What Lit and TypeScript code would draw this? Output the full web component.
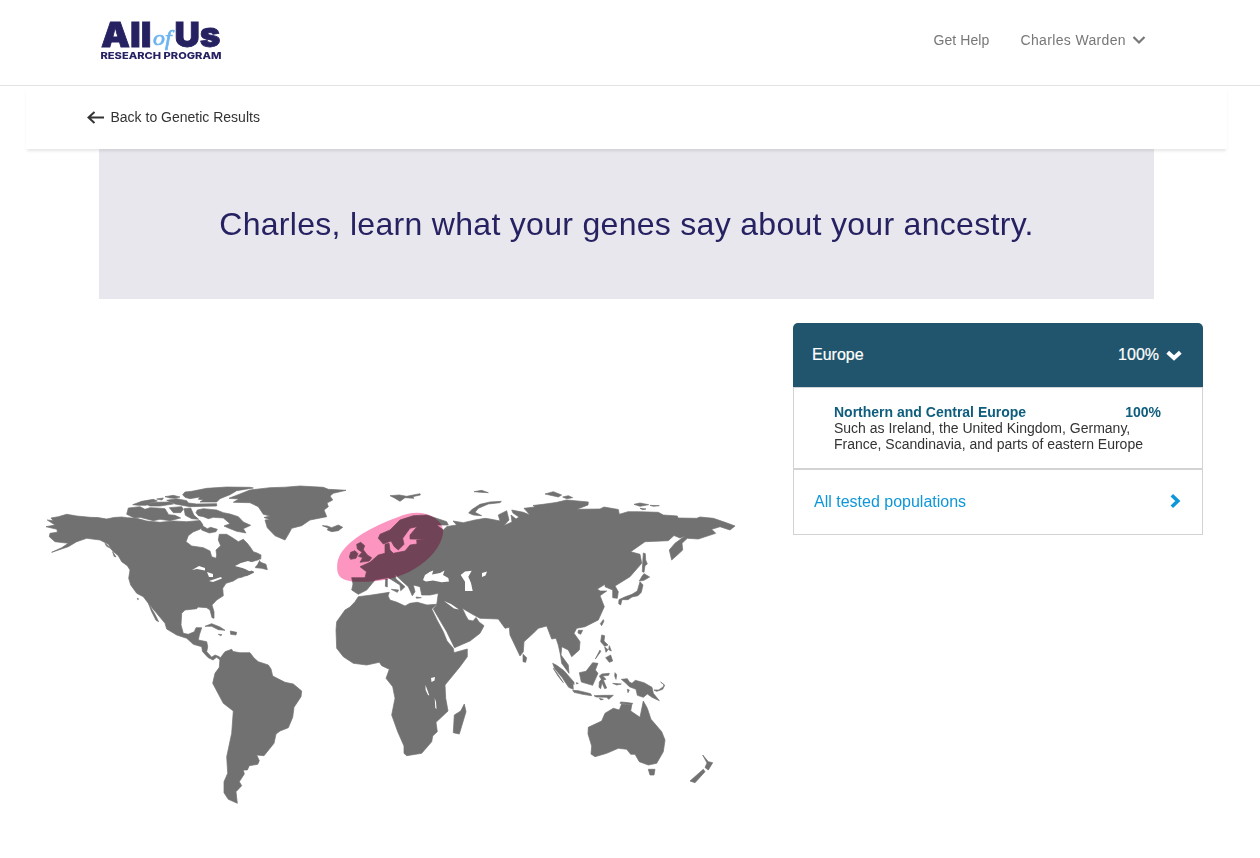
import { LitElement, html, css, svg } from "lit";
import { customElement } from "lit/decorators.js";

const LAND = [
  // North America
  "M46 526.7L55 525 47.3 520 53.3 520.7 51 518 58.3 516.7 66.7 514.3 76.7 516 90 517.3 98 517.6 106.7 519 114 517.5 121.7 517 127.3 517.7 136.7 518.3 146.7 521 160 522.3 173.3 521 186.7 521.7 200 520.5 203 525 200.500 529 193 532 188.3 535.7 186 541.7 191.7 546 203.3 547.7 210 551 211.7 556.7 216 558.3 216.7 555 216 550 220.7 545.7 218.3 540 219.3 534.3 226.7 534.3 233.3 538.3 238.3 541.7 243.3 539.3 247 543 250 546.7 253.3 551.7 257 553 261 555 260.7 559 250 562.3 240 563.3 235 567 246 563.5 243.3 568.3 248.3 571 253.3 571.7 250 574 241.7 577.3 238 578 233.3 581 226 583.3 222.7 588.3 223.3 595.7 216.7 600 212 605 214 611.7 214 618.3 212 617.7 210 610 206.7 607.7 198 607 196.7 608.7 185 610 181.7 613.3 181 625 183.3 633.3 188.3 634.3 194.3 631.7 196 627.7 201.7 627.7 199.3 635 198.3 640 206.7 641.7 207.7 646.7 206.7 651.7 211.7 657.2 215 655 219.3 656.7 220.5 660 216.5 657.3 213 660 208 657.5 202.5 651.5 201.7 646.7 193.3 644.3 186.7 638.3 176.7 635 166.7 629 165 623.3 156.7 613.3 148.3 603.3 143.3 596.7 136.7 593.3 130.7 585 128.7 578.3 130 570 127.3 565.7 121.7 561.7 118.3 555.7 111.7 550 108.3 544.3 100 540 86.7 538.3 76.7 541.7 68.3 546.7 51.7 552.3 61.7 547.7 68.3 543.3 60 542.3 55 541.7 49.3 536.7 50 533.3 57.3 532.3 57 529.3Z",
  // Greenland
  "M229 498.3L240 494 250 490 270 487.7 285 487.2 300 486 323.3 487.3 328.3 489.3 346 490.3 333.3 493.3 330 496 332.7 500 327 503 328.3 506.7 324 510 326.7 516.7 310 520 301.7 525.7 291.7 528.3 289 533.3 285 540 275 535.7 267.3 527.7 265 520 270 519.5 264 517.5 270 516 263.3 514.3 258.3 506.7 250 502.7 233.3 502.3 239 499Z",
  // South America
  "M220 658.3L225 651.7 231.7 649.3 233 651.5 240 652.7 250 652.7 254 658 258.3 661.7 268.3 665 271 669 272.7 676 285 682.3 293.3 684 301.7 691 301 696.7 294 707.3 292.7 717.3 288.3 727.7 280 731 276 734 274 743.3 264 755.7 256.7 755 259.3 760.7 257.7 764.3 249.3 765.7 247.3 770 243.3 770 244.3 774 239.3 781.7 241.7 785.7 236 791.7 237.3 803.3 228.3 799.3 224 792.7 224 781.7 227.7 773.3 226.7 756.7 231.7 733.3 233.3 711 223.3 703.3 212.7 683.3 215 673.3 219.3 667.3Z",
  // Africa
  "M358.3 596.7L371.7 595 389.3 592.3 388 596 390 600 397 602.3 405 606 410 603.3 417.3 602.3 427 605 436.7 604.3 431.7 609 437 620 443.3 631.7 447 641 453.3 648.3 454 652.7 467.3 649 467.3 656.7 460 666.7 445 685 445.7 698.3 448 711 436 722.3 437.3 731.7 432.7 736 431.7 741.7 421.7 753.3 406.7 755.7 404 753.3 404 746 397.7 731.7 391.7 715 395 698.3 392.7 686.7 386 678.3 389.3 669.3 381.7 665.7 379.3 662.3 366.7 665 353.3 663.3 343.3 656.7 336.7 648.3 336 630 336.7 621.7 345 610 350 607 355 601.7Z",
  "M464.3 704L466 711.7 459.3 734 453.3 732.7 454.3 715 460.7 711Z",
  // Eurasia
  "M351.7 577.7L365 577.7 366.5 571.7 360 566.7 370 562.3 378.3 555 385 553.3 385 544.3 389 543.3 390 550 393.3 553.3 405 551 410 545 417 544 416.7 540 426.7 539.3 410 539 410 535 417 526.7 410 528.3 402.7 538.3 404 544.3 398.3 550 394.3 546.7 391 541 383.3 544 378.3 538.3 380 534.3 390 530 400 520 413.3 515.7 426.7 515 446.7 521.7 448.3 525 436.7 525 443.3 530 447 526.5 456.7 525 453 521 463.3 522.7 475 520 485 518.3 490 519 500 521 498.3 515 506.7 510.7 509 520 504 525.5 512 522 511 515 516 519 519 517 513 513 511.7 510 523.3 512.3 530 515 524 508.3 535 507 533 505.5 543.3 504.3 556 502.5 566.7 500 588.3 502 588 505 576.7 509.3 600 509 604 507 618.3 509.5 619.3 514.3 628 511.7 638.3 511.7 658.3 512.3 663.3 515 677.3 516 678 518 696.7 518.3 700 517 713.3 518.3 725 522.3 735 526 730 530 720 526.7 711.7 529.3 715.7 533.3 698.3 539 687.3 538.3 682 543.3 682.7 550 677.3 555 671.7 560 669.3 550 675 543.3 685 536 680 538 674 535.5 668.3 540.7 645 541.7 630.7 551.7 640 554.3 641.7 563.3 630 576.7 615 586 618.3 591.7 617.3 598.3 612.7 597.7 612.7 590 605 586.7 605 584.3 597.3 589 600 591 606.7 591 600 595.7 604.3 606.7 598.3 620 585 626.7 576.7 628.3 574 633.3 580 641.7 579.3 650 571.7 656.7 568.3 650 561.7 646.7 561 655 568.3 665 569 673.3 561.7 663.3 560.5 655 558.3 645 556 638.3 551.7 639 546.7 626 538.3 628.3 533.3 633.3 524 641.7 523.3 651.7 520 656 510 635 509.3 627.3 505 628.3 498.3 619 480 618.3 472 614 462.3 608.3 466 616 468.3 620 473 621 476 617.5 479 622 484 625.7 480 633.3 470 641 454.5 647.7 446.7 631.7 433.3 609 436.7 605 438.3 593.3 430 595 421.7 595 420 586.7 413.3 585 415 591.7 412.3 595.7 408.3 586.7 403 582 395 574.5 396 579 405 586.7 400.7 590.7 400 585 392 580 388.3 577.7 375 580 366.7 590 358.3 594.3 351.7 590 353 584Z",
  // Australia
  "M588.3 727.3L601.7 721 605 713.3 613.3 708.3 619.3 710 621.7 704 631.7 705 630.7 711 640 717.3 643.3 701 647.3 708.3 651 719.3 661.7 731.7 665 740 663.3 751.7 656.7 763.3 648.3 765 639.3 761.7 635 754.3 630.7 754.3 626.7 749.3 618.3 748.3 606.7 753.3 595 756.7 591 754 591.7 746 588 734Z",
  "M648.3 769.3L655 769.3 654 775 650 775Z",
  "M702.7 755L708.3 761.7 712.7 762.7 708.3 770 705 767.5 707 763Z",
  "M703.3 769.3L705 771.7 695 782.7 690 781Z",
];

// Islands are drawn on grids three times finer than the map.
const ARCTIC_ISLANDS = [
  "M25 78L60 74 75 82 90 77 110 78 135 80 146 98 165 100 182 108 150 116 120 112 100 116 60 106 44 108 20 97Z",
  "M38 68L65 58 100 52 112 57 90 63 78 70 55 70ZM78 67L105 61 150 60 160 66 120 72 90 72Z",
  "M135 44L160 40 180 45 165 49 150 48ZM110 51L130 48 126 54ZM140 55L170 50 200 56 205 63 230 66 290 65 290 72 210 74 165 66Z",
  "M188 38L195 30 215 28 260 19 320 15 390 16 400 18 350 26 330 38 300 50 290 60 240 60 250 53 235 52 240 45 210 50 195 46Z",
  "M148 77L185 74 190 82 182 92 160 92ZM192 80L212 78 222 100 236 112 215 110 196 100Z",
  "M228 92L232 84 250 80 290 84 310 92 330 96 355 104 370 120 392 130 370 140 378 153 350 148 325 138 312 132 330 125 310 108 280 106 265 110 250 104 235 101Z",
  "M242 128L262 140 272 136 292 142 288 149 268 153 245 144Z",
];

const NORTH_ISLANDS = [
  // Newfoundland, Caribbean, Alaska and Baja fragments
  "M655 252L662 262 678 268 682 284 665 280 646 278ZM605 298L635 288 642 292 620 302ZM495 454L515 446 540 456 555 466 535 464 515 454ZM571 468L590 472 588 480 572 478ZM535 478L546 479 542 482ZM195 205L204 212 212 220 200 214ZM218 230L228 246 222 244ZM326 386L346 420 356 440 348 436 334 408ZM292 370L296 372 293 374ZM100 196L112 187 120 192 108 200Z",
  // Iceland
  "M847 152L862 153 875 158 895 150 908 157 895 167 875 170 862 165 865 159Z",
  // Svalbard and Novaya Zemlya
  "M1050 62L1078 60 1100 64 1140 56 1141 60 1118 65 1122 70 1095 68 1080 79 1062 68ZM1302 50L1325 46 1345 53 1322 52ZM1286 114L1295 104 1320 88 1350 81 1384 79 1380 83 1345 87 1315 100 1305 112 1325 122 1300 120Z",
  "M1515 57L1540 50 1565 60 1555 66ZM1568 66L1585 62 1598 68 1580 71ZM1782 88L1800 84 1826 89 1800 94ZM1830 91L1858 92 1840 94ZM1800 100L1818 102 1808 104Z",
  // British Isles, Corsica, Sardinia, Crete, Cyprus
  "M928 246L932 232 945 227 954 236 948 250 932 253ZM950 208L962 202 974 212 970 224 982 240 995 248 988 258 960 262 968 248 955 244 966 232 952 222ZM1037 312L1042 312 1042 336 1036 334ZM1054 343L1076 345 1072 352ZM1128 366L1144 368 1130 370ZM1194 380L1203 378 1198 383Z",
  // Sakhalin, Japan
  "M1810 234L1816 236 1817 255 1822 267 1815 272 1812 292 1807 290 1808 264ZM1806 304L1812 296 1829 306 1812 316 1798 318ZM1800 320L1809 330 1804 352 1794 362 1776 366 1764 374 1746 374 1742 390 1736 386 1737 374 1754 366 1776 358 1792 348Z",
  // Taiwan, Hainan, Sri Lanka, Philippines
  "M1690 434L1692 438 1685 452 1681 446ZM1615 466L1628 466 1622 478 1614 474ZM1449 538L1460 548 1457 562 1449 560ZM1685 480L1694 482 1692 498 1704 510 1694 514 1682 500ZM1708 512L1714 528 1706 524ZM1694 516L1704 524 1698 532ZM1697 548L1712 540 1718 558 1708 562ZM1680 525L1682 530 1666 552Z",
];

const SOUTH_ISLANDS = [
  "M38 70L50 76 72 92 98 122 100 148 86 142 66 112 44 86Z",
  "M98 151L115 152 152 161 155 167 128 163 102 157ZM162 167L190 166 220 166 206 178 200 172 168 171Z",
  "M118 98L138 94 158 68 174 70 166 90 174 100 158 136 124 126Z",
  "M178 108L186 102 208 100 206 106 188 108 198 118 190 120 200 144 194 146 186 128 182 146 177 142 178 126 184 118Z",
  "M225 98L230 104 228 118 224 108ZM218 130L244 132 230 135ZM178 175L190 178 182 180ZM262 148L268 150 264 158ZM95 122L102 126 102 134ZM109 128L115 130 110 132Z",
  "M244 118L262 116 268 126 276 130 286 121 312 128 336 142 340 160 358 182 336 172 322 162 310 172 292 166 288 148 268 140 256 128Z",
  "M342 150L356 150 370 140 372 134 362 126 374 136 368 148 350 154Z",
  "M242 186L255 187 278 190 276 194 258 192 240 190Z",
  "M40 85L55 105 70 128 54 108Z",
];

const WATER = [
  // Black Sea, Caspian, Aral
  "M423 580L425 575 430 571.7 433.3 570.5 432 574.5 440 573 444.5 570.5 443 575 448.3 578 449 581.5 441.7 582.3 433 580.5 426 581.5Z",
  "M460.7 575L465 571.5 471.7 570.7 468.3 576.7 471 583 472.7 591 465 591 465 581.7Z",
  "M482 573L487 571.5 485.5 575.5 482 577Z",
  "M444 601L451 604 459 609.5 454 608.5Z",
  // Great Lakes and Gulf of St Lawrence
  "M192 570L199 566 205 568 205 570.5 197 569ZM207 572L213 574 213 577 209 577ZM209 581L221 577 222 578.5 213 582Z",
  "M235 566L241 563 248 561 254 563 260 559 257 565 250 571 246 569Z",
  // African lakes
  "M431 678L435 677 434.5 680.5 431.5 682ZM425.5 685L427 689 429.3 695.5 428 695 425.6 690ZM434.7 698L436 702 436.5 709 435.3 708Z",
];

const HIGHLIGHT =
  "M337.3 570C336 558 342 550 351 542C365 530 385 522 397 517.500C410 511.500 424 511 434 517.500C442 523 445 529 442 538C438 551 426 563 409 572C393 580 372 583 352 581.500C342 580 338 577 337.300 570Z";

@customElement("world-map")
class WorldMap extends LitElement {
  static styles = css`
    :host { display: block; }
    .map { display: block; width: 700px; height: 330px; }
    .land { fill: #717171; stroke: #717171; stroke-width: 0.7; stroke-linejoin: round; }
    .islands { stroke-width: 2; }
    .water { fill: #fff; }
    .highlight { fill: #fc96c1; mix-blend-mode: multiply; }
  `;
  render() {
    return html`<svg class="map" viewBox="40 480 700 330" role="img" aria-label="World map">
      <g class="land">
        ${LAND.map((d) => svg`<path d=${d} />`)}
        <g class="islands" transform="translate(120 482) scale(.33333)">${ARCTIC_ISLANDS.map((d) => svg`<path d=${d} />`)}</g>
        <g class="islands" transform="translate(40 475) scale(.33333)">${NORTH_ISLANDS.map((d) => svg`<path d=${d} />`)}</g>
        <g class="islands" transform="translate(540 640) scale(.33333)">${SOUTH_ISLANDS.map((d) => svg`<path d=${d} />`)}</g>
      </g>
      <g class="water">${WATER.map((d) => svg`<path d=${d} />`)}</g>
      <path class="highlight" d=${HIGHLIGHT} />
    </svg>`;
  }
}

@customElement("app-root")
class AppRoot extends LitElement {
  static styles = css`
    :host { display: block; width: 1260px; height: 858px; overflow: hidden; background: #fff; font-family: "Liberation Sans", Arial, sans-serif; color: #333; }
    * { box-sizing: border-box; }
    .header { height: 86px; border-bottom: 1px solid #e2e2e2; display: flex; justify-content: space-between; padding: 0 114px 0 100px; }
    .logo { display: block; margin-top: 4px; }
    .big { font: 900 34.5px Inter, sans-serif; fill: #262262; stroke: #262262; stroke-width: 0.8; }
    .of { font: italic 22px "Liberation Serif", serif; fill: #6cb4f0; stroke: #6cb4f0; stroke-width: 0.7; }
    .small { font: 800 9.4px Inter, sans-serif; fill: #262262; }
    .nav { display: flex; gap: 31px; height: 80px; align-items: center; font-size: 14px; letter-spacing: 0.1px; color: #777; }
    .user { display: flex; align-items: center; gap: 6px; letter-spacing: 0.35px; }
    .back { width: 1201px; height: 63px; margin-left: 26px; padding: 0 0 1px 61px; display: flex; align-items: center; gap: 5.5px; font-size: 14px; position: relative; box-shadow: 0 3px 3px -1px rgba(0, 0, 0, 0.1); }
    .hero { width: 1055px; height: 150px; margin-left: 99px; background: #e8e7ed; display: flex; align-items: center; justify-content: center; }
    .title { margin: 0; font-size: 32px; font-weight: 400; letter-spacing: 0.3px; color: #262262; white-space: nowrap; }
    .content { display: flex; padding: 24px 0 0 40px; }
    .mapbox { width: 753px; padding-top: 157px; }
    .panel { width: 410px; }
    .region { height: 64px; background: #21556d; color: #fff; border-radius: 5px 5px 0 0; display: flex; align-items: center; justify-content: space-between; padding: 0 21px 0 19px; font-size: 16px; -webkit-text-stroke: 0.2px #fff; }
    .value { display: flex; align-items: center; gap: 7px; }
    .detail { height: 82px; border: 1px solid #d3d3d3; padding: 16px 41px 0 40px; font-size: 14px; line-height: 16px; white-space: nowrap; }
    .row { display: flex; justify-content: space-between; font-weight: 700; color: #0e5d7d; }
    .all { height: 66px; border: 1px solid #d3d3d3; display: flex; align-items: center; justify-content: space-between; padding: 0 21px 0 20px; font-size: 16px; color: #0e97d8; }
    .next { margin-bottom: 2px; }
  `;
  render() {
    return html`
      <header class="header">
        <svg class="logo" width="130" height="64" viewBox="100 4 130 64" role="img" aria-label="All of Us Research Program">
          <text class="big" x="101" y="46.500" textLength="50.500" lengthAdjust="spacingAndGlyphs">All</text>
          <text class="of" x="153" y="44.500" textLength="18.500" lengthAdjust="spacingAndGlyphs">of</text>
          <text class="big" x="174.500" y="46.500" textLength="46" lengthAdjust="spacingAndGlyphs">Us</text>
          <text class="small" x="100.500" y="58.800" textLength="121" lengthAdjust="spacingAndGlyphs">RESEARCH PROGRAM</text>
        </svg>
        <nav class="nav">
          <span>Get Help</span>
          <span class="user">Charles Warden
            <svg width="14" height="10" viewBox="0 0 14 10"><path d="M1.500 2l5.500 5.500L12.500 2" fill="none" stroke="#777" stroke-width="2.200" /></svg>
          </span>
        </nav>
      </header>
      <div class="back">
        <svg width="18" height="14" viewBox="0 0 18 14"><path d="M17 7.500H1.500M7.500 2L1.500 7.500l6 5.500" fill="none" stroke="#333" stroke-width="2" /></svg>
        <span>Back to Genetic Results</span>
      </div>
      <section class="hero"><h1 class="title">Charles, learn what your genes say about your ancestry.</h1></section>
      <main class="content">
        <div class="mapbox"><world-map></world-map></div>
        <section class="panel">
          <div class="region"><span>Europe</span><span class="value">100%
            <svg width="16" height="12" viewBox="0 0 16 12"><path d="M1.700 3.200L8 9l6.300-5.800" fill="none" stroke="#fff" stroke-width="4" /></svg>
          </span></div>
          <div class="detail">
            <div class="row"><span>Northern and Central Europe</span><span>100%</span></div>
            <div>Such as Ireland, the United Kingdom, Germany,<br />France, Scandinavia, and parts of eastern Europe</div>
          </div>
          <div class="all"><span>All tested populations</span>
            <svg class="next" width="11" height="16" viewBox="0 0 11 16"><path d="M1.800 2.200L7.800 8l-6 5.800" fill="none" stroke="#0e97d8" stroke-width="3.600" /></svg>
          </div>
        </section>
      </main>
    `;
  }
}
